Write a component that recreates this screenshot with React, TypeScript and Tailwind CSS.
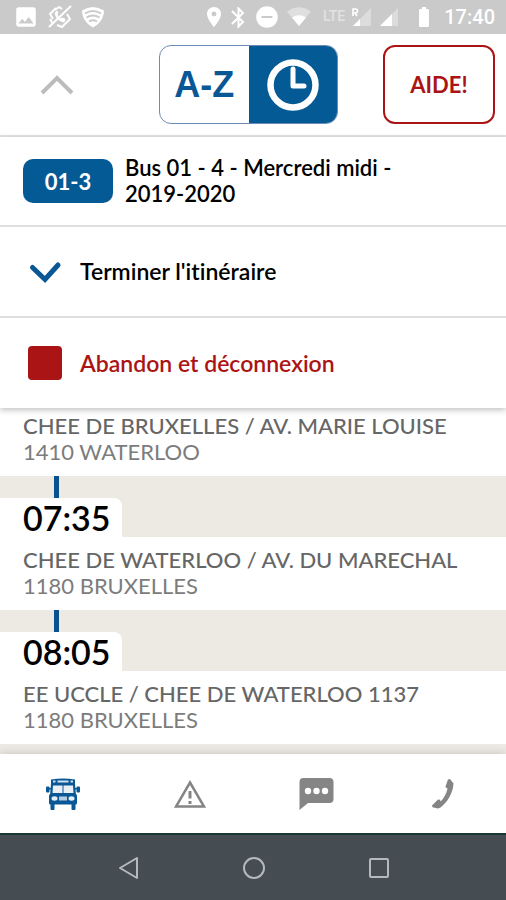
import { MdImage, MdLocationOn, MdBluetooth, MdRemoveCircle, MdBatteryFull } from "react-icons/md";

const stops = [
  { time: "07:35", street: "CHEE DE WATERLOO / AV. DU MARECHAL", city: "1180 BRUXELLES" },
  { time: "08:05", street: "EE UCCLE / CHEE DE WATERLOO 1137", city: "1180 BRUXELLES" },
];

function StatusBar() {
  return (
    <div className="flex h-[34px] shrink-0 items-center justify-between bg-[#cacaca] pr-[11px] pl-[13px] text-white">
      <div className="flex items-center gap-2">
        <MdImage size={26} />
        <svg width="26" height="24" viewBox="0 0 26 24" fill="none" stroke="currentColor" strokeWidth="2">
          <path d="M2 22L24 1" />
          <path d="M9 3L3 9l3 5M10 20l5 2 8-8-3-5M8 5l4-3 3 2M3 14l3 5" />
          <path d="M8 8c1 5 4 8 9 9l1-3-3-1-2 1-3-4 1-2-1-2z" fill="currentColor" strokeWidth="1" />
        </svg>
        <svg width="24" height="22" viewBox="0 0 24 22">
          <path d="M1 4.500Q12-2.500 23 4.500C23 12 18.500 18 12 21.500C5.500 18 1 12 1 4.500z" fill="currentColor" />
          <path d="M4 7.500Q12 2.500 20 7.500M5.500 11.500Q12 7.500 18.500 11.500M8 15.500Q12 13 16 15.500" fill="none" stroke="#cacaca" strokeWidth="1.800" />
        </svg>
      </div>
      <div className="flex items-center">
        <MdLocationOn size={24} />
        <MdBluetooth size={25} />
        <MdRemoveCircle size={26} className="ml-[3px]" />
        <svg className="ml-[7px]" width="24" height="20" viewBox="0 0 24 20" fill="currentColor">
          <path d="M12 19L0 4.500Q12-4 24 4.500z" opacity=".4" />
          <path d="M12 19L5 10.500Q12 6 19 10.500z" />
        </svg>
        <span className="ml-3 self-start font-['Roboto',sans-serif] text-sm leading-[26px] font-medium opacity-45">LTE</span>
        <svg className="ml-1.5" width="21" height="20" viewBox="0 0 21 20" fill="currentColor">
          <path d="M20 1v18H2z" opacity=".35" />
          <path d="M9 12v7H2z" />
          <path d="M2 9V2h2.500a1.500 1.500 0 0 1 0 4H2M4 6l2 3" fill="none" stroke="currentColor" strokeWidth="1.600" />
        </svg>
        <svg className="ml-2" width="18" height="18" viewBox="0 0 18 18" fill="currentColor">
          <path d="M18 0v18H0z" opacity=".35" />
          <path d="M12 6v12H0z" />
        </svg>
        <MdBatteryFull size={24} className="ml-3.5" />
        <span className="ml-2 font-['Roboto',sans-serif] text-xl font-medium">17:40</span>
      </div>
    </div>
  );
}

function BusIcon() {
  return (
    <svg width="34" height="32" viewBox="0 0 34 32" fill="#0a5796">
      <path d="M5 1.500Q17-.5 29 1.500V6H5z" />
      <path d="M5 5.500h24l1 12H4z" />
      <rect x="0" y="8.500" width="3.500" height="6" rx="1" />
      <rect x="30.500" y="8.500" width="3.500" height="6" rx="1" />
      <path d="M3 10h28v1.500H3z" />
      <rect x="3" y="16" width="28" height="10.500" rx="1.500" />
      <rect x="4.500" y="25" width="4" height="7" rx="1" />
      <rect x="25.500" y="25" width="4" height="7" rx="1" />
      <path d="M7 7.500h9.500V15H6.500zM17.500 7.500H27l.5 7.500h-10z" fill="#e9eff5" />
      <path d="M11.500 2.500h11v2h-11zM7 2.500h2.500v2H7zM24.500 2.500H27v2h-2.500z" fill="#cfe0ee" />
      <ellipse cx="8.500" cy="20.500" rx="3" ry="2.200" fill="#e6eff6" />
      <ellipse cx="25.500" cy="20.500" rx="3" ry="2.200" fill="#e6eff6" />
      <rect x="13" y="18.500" width="8" height="4" fill="#b4cde1" />
    </svg>
  );
}

function Address({ street, city }: { street: string; city: string }) {
  return (
    <div className="px-[23px] pb-[11px] text-[22px] leading-[26px]">
      <p className="font-medium text-[#666]">{street}</p>
      <p className="text-[#7c7c7c]">{city}</p>
    </div>
  );
}

export default function App() {
  return (
    <div className="flex min-h-screen flex-col bg-white font-['Lato',sans-serif] text-black [font-variant-ligatures:none]">
      <StatusBar />

      <header className="flex h-[103px] items-center justify-between border-b-2 border-[#e4e4e4] pr-[11px] pl-10">
        <button aria-label="Replier" className="text-[#bcbcbc]">
          <svg width="34" height="20" viewBox="0 0 34 20" fill="none" stroke="currentColor" strokeWidth="4">
            <path d="M2 18L17 3l15 15" />
          </svg>
        </button>
        <div className="ml-10 flex h-[79px] w-[179px] overflow-hidden rounded-xl border border-[#6d8bb5]">
          <button className="w-1/2 font-['Liberation_Sans',sans-serif] text-4xl font-bold text-[#0a5796]">A-Z</button>
          <button aria-label="Horaire" className="flex w-1/2 items-center justify-center bg-[#045a95] text-white">
            <svg width="52" height="52" viewBox="0 0 52 52" fill="none" stroke="currentColor">
              <circle cx="26" cy="26" r="22.500" strokeWidth="6.500" />
              <path d="M26 10v17h11" strokeWidth="5" strokeLinecap="round" strokeLinejoin="round" />
            </svg>
          </button>
        </div>
        <button className="h-[79px] w-28 rounded-xl border-2 border-[#ab1414] text-[22px] font-bold text-[#ab1414]">AIDE!</button>
      </header>

      <section className="relative shadow-[0_2px_6px_rgba(0,0,0,0.25)]">
        <div className="flex h-[90px] items-center gap-3 border-b-2 border-[#dfdfdf] px-[23px]">
          <span className="flex h-11 w-[90px] shrink-0 items-center justify-center rounded-[10px] bg-[#045a95] text-[22px] font-bold text-white">01-3</span>
          <h1 className="max-w-72 text-[22px] leading-[26px] font-semibold">Bus 01 - 4 - Mercredi midi - 2019-2020</h1>
        </div>
        <button className="flex h-[91px] w-full items-center border-b-2 border-[#dfdfdf] pl-7 text-left text-[23px] font-semibold">
          <svg className="mr-[18px] text-[#0a5796]" width="34" height="24" viewBox="0 0 34 24" fill="none" stroke="currentColor" strokeWidth="5" strokeLinecap="round">
            <path d="M4.500 7.500L17 19.500 30 5" />
          </svg>
          Terminer l'itinéraire
        </button>
        <button className="flex h-[90px] w-full items-center pl-7 text-left text-[23px] font-semibold text-[#ab1414]">
          <span className="mr-[18px] size-[34px] rounded-sm bg-[#ab1414]" />
          Abandon et déconnexion
        </button>
      </section>

      <main className="flex-1 bg-[#edeae4]">
        <div className="bg-white pt-[5px]">
          <Address street="CHEE DE BRUXELLES / AV. MARIE LOUISE" city="1410 WATERLOO" />
        </div>
        {stops.map((stop) => (
          <article key={stop.time}>
            <div className="ml-[54px] h-[22px] w-[5px] bg-[#0a5190]" />
            <h2 className="h-[39px] w-[122px] rounded-tr-lg bg-white pl-[23px] text-[34px] leading-[39px] font-semibold">{stop.time}</h2>
            <div className="bg-white pt-2.5">
              <Address street={stop.street} city={stop.city} />
            </div>
          </article>
        ))}
      </main>

      <nav className="grid h-[79px] shrink-0 grid-cols-4 place-items-center bg-white text-[#858585] shadow-[0_-1px_8px_rgba(0,0,0,0.15)]">
        <a href="#bus" aria-label="Bus"><BusIcon /></a>
        <a href="#alertes" aria-label="Alertes">
          <svg width="32" height="28" viewBox="0 0 32 28" fill="none" stroke="currentColor">
            <path d="M16 2.500L30 26.500H2z" strokeWidth="2.500" />
            <path d="M16 11v7.500M16 21v3" strokeWidth="3" />
          </svg>
        </a>
        <a href="#messages" aria-label="Messages">
          <svg width="35" height="32" viewBox="0 0 35 32" fill="currentColor">
            <path d="M4.500 0h26a4 4 0 0 1 4 4v17a4 4 0 0 1-4 4H9l-8.500 7V4a4 4 0 0 1 4-4z" />
            <g fill="#fff">
              <circle cx="9" cy="13" r="3.200" />
              <circle cx="17.500" cy="13" r="3.200" />
              <circle cx="26" cy="13" r="3.200" />
            </g>
          </svg>
        </a>
        <a href="#appel" aria-label="Appel">
          <svg width="22" height="30" viewBox="0 0 22 30" fill="currentColor">
            <path d="M16 0.500l2-.5 3.500 4.500-.5 4C19.500 16 15 23.500 8.500 28.500l-2.500 1-5.500-1.200L0 26.500 6 20.500l2 .2.700 1.800C12 19 14.500 14.500 15.500 9.500l-2.200-1.500z" />
          </svg>
        </a>
      </nav>

      <div className="flex h-[67px] shrink-0 items-center justify-center gap-[104px] border-t-2 border-[#1c3836] bg-[#454d52] text-[#b4babb]">
        <button aria-label="Retour">
          <svg width="22" height="22" viewBox="0 0 22 22" fill="none" stroke="currentColor" strokeWidth="2" strokeLinejoin="round">
            <path d="M20 1v20L3 11z" />
          </svg>
        </button>
        <button aria-label="Accueil" className="size-[22px] rounded-full border-2 border-current" />
        <button aria-label="Applications" className="size-5 rounded-xs border-2 border-current" />
      </div>
    </div>
  );
}
